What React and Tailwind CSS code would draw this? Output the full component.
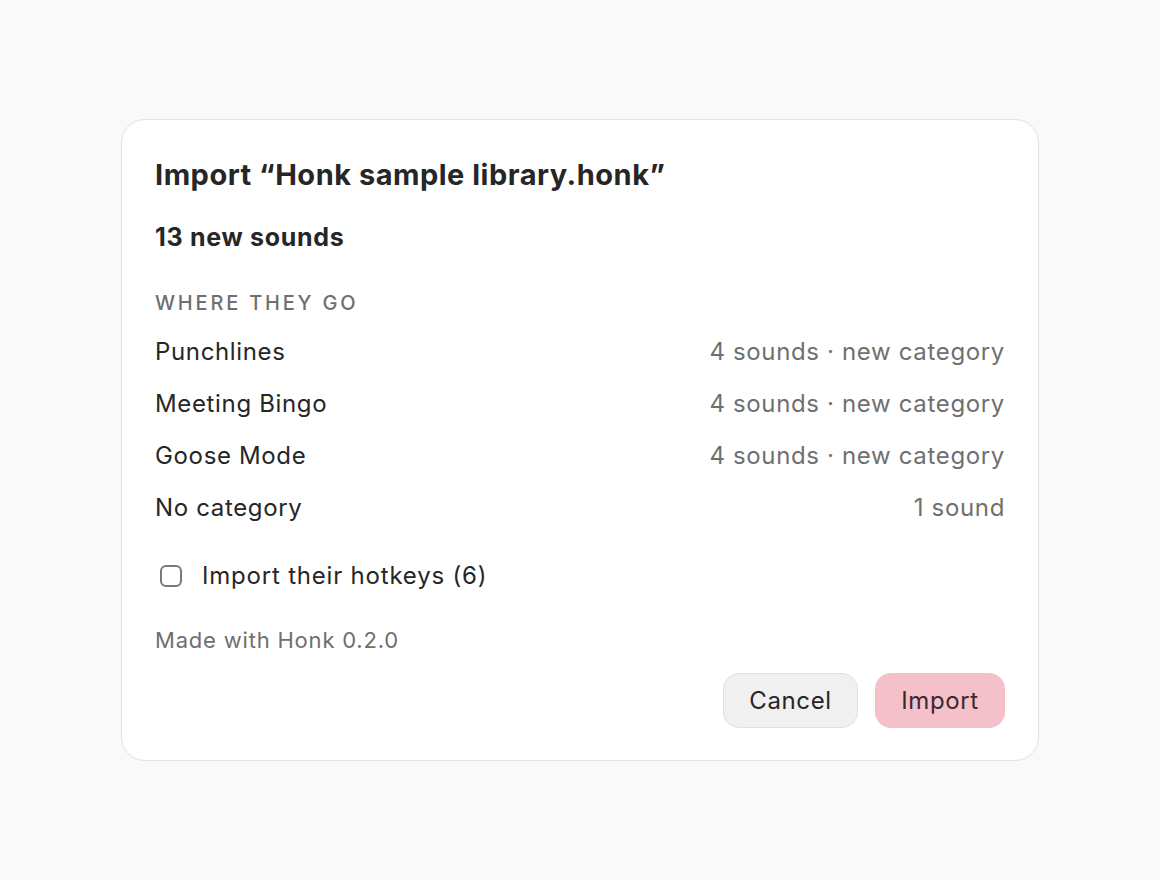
import React from 'react';

const rows = [
  { name: 'Punchlines', detail: '4 sounds · new category' },
  { name: 'Meeting Bingo', detail: '4 sounds · new category' },
  { name: 'Goose Mode', detail: '4 sounds · new category' },
  { name: 'No category', detail: '1 sound' },
];

const App = () => {
  return (
    <div
      className="min-h-screen w-full bg-[#f9f9f9] flex items-center justify-center"
      style={{ fontFamily: 'Inter, "Noto Sans", sans-serif' }}
    >
      <div className="w-[918px] bg-white border border-[#e2e2e2] rounded-[24px] px-[33px] pt-[37px] pb-[32px] flex flex-col text-[#262626]">
        {/* Title */}
        <h1 className="text-[29px] leading-[36px] font-bold tracking-[0.5px]">
          Import “Honk sample library.honk”
        </h1>

        <div className="mt-[28px] text-[25px] leading-[32px] font-bold tracking-[0.7px]">13 new sounds</div>

        {/* Destinations */}
        <div className="mt-[36px] text-[20px] leading-[28px] font-medium tracking-[2.8px] text-[#6f6f6f] uppercase">
          Where they go
        </div>
        <div className="mt-[9px] flex flex-col">
          {rows.map((r) => (
            <div key={r.name} className="h-[52px] flex items-center justify-between text-[24px] tracking-[0.65px]">
              <span>{r.name}</span>
              <span className="text-[#6f6f6f]">{r.detail}</span>
            </div>
          ))}
        </div>

        {/* Hotkeys */}
        <label className="mt-[26px] h-[32px] flex items-center gap-[20px] text-[24px] tracking-[0.8px] pl-[5px]">
          <span className="w-[22px] h-[22px] rounded-[6px] border-2 border-[#7a7a7a] bg-white" />
          <span>Import their hotkeys (6)</span>
        </label>

        <div className="mt-[34px] text-[22px] leading-[28px] tracking-[0.8px] text-[#6f6f6f]">Made with Honk 0.2.0</div>

        {/* Actions */}
        <div className="mt-[19px] flex justify-end gap-[17px]">
          <button className="h-[55px] w-[135px] rounded-[16px] bg-[#f0f0f0] border border-[#e0e0e0] text-[24px] tracking-[0.6px] text-[#262626]">
            Cancel
          </button>
          <button className="h-[55px] w-[130px] rounded-[16px] bg-[#f4c1cb] text-[24px] tracking-[0.6px] text-[#3a2a2e]">
            Import
          </button>
        </div>
      </div>
    </div>
  );
};

export default App;
